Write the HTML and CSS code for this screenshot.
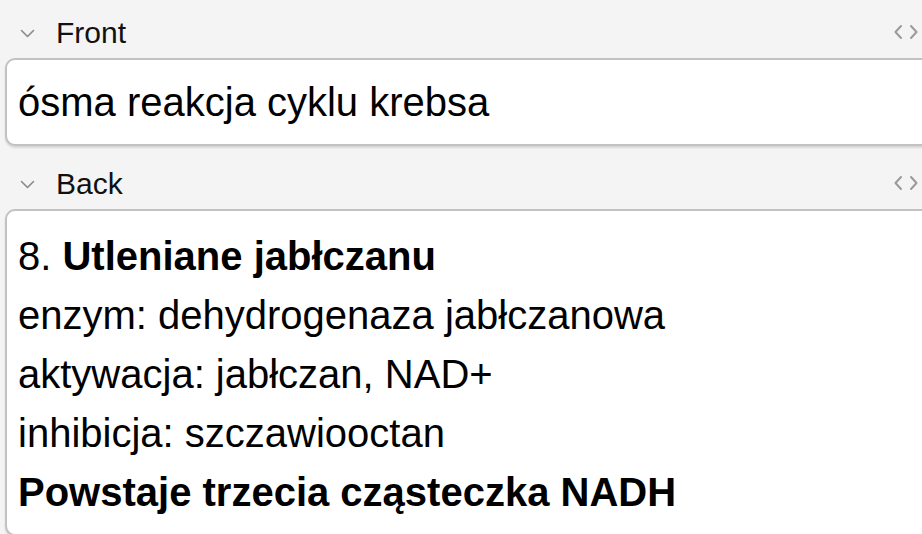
FILE: index.html
```html
<!DOCTYPE html>
<html lang="pl">
<head>
<meta charset="utf-8">
<title>Editor</title>
<link rel="stylesheet" href="styles.css">
</head>
<body>
<div class="fields">
  <div class="field">
    <div class="label-row">
      <svg class="chevron" width="15" height="9" viewBox="0 0 15 9"><path d="M1.5 1.5 L7.5 7.5 L13.5 1.5" fill="none" stroke="#8a8a8a" stroke-width="1.6" stroke-linecap="round" stroke-linejoin="round"/></svg>
      <span class="label">Front</span>
      <svg class="code" width="26" height="16" viewBox="0 0 26 16"><path d="M8 2 L2.5 8 L8 14 M18 2 L23.5 8 L18 14" fill="none" stroke="#9a9a9a" stroke-width="2" stroke-linecap="round" stroke-linejoin="round"/></svg>
    </div>
    <div class="editor front">ósma reakcja cyklu krebsa</div>
  </div>
  <div class="field">
    <div class="label-row">
      <svg class="chevron" width="15" height="9" viewBox="0 0 15 9"><path d="M1.5 1.5 L7.5 7.5 L13.5 1.5" fill="none" stroke="#8a8a8a" stroke-width="1.6" stroke-linecap="round" stroke-linejoin="round"/></svg>
      <span class="label">Back</span>
      <svg class="code" width="26" height="16" viewBox="0 0 26 16"><path d="M8 2 L2.5 8 L8 14 M18 2 L23.5 8 L18 14" fill="none" stroke="#9a9a9a" stroke-width="2" stroke-linecap="round" stroke-linejoin="round"/></svg>
    </div>
    <div class="editor back">
      <div>8. <b>Utleniane jabłczanu</b></div>
      <div>enzym: dehydrogenaza jabłczanowa</div>
      <div>aktywacja: jabłczan, NAD+</div>
      <div>inhibicja: szczawiooctan</div>
      <div><b>Powstaje trzecia cząsteczka NADH</b></div>
    </div>
  </div>
</div>
</body>
</html>
```
FILE: styles.css
```css
html, body {
  margin: 0;
  padding: 0;
  background: #f4f4f4;
  overflow: hidden;
}
body {
  font-family: "Liberation Sans", Arial, sans-serif;
  color: #000;
}
.fields {
  display: flex;
  flex-direction: column;
  margin-top: -5px;
}
.label-row {
  display: flex;
  align-items: center;
  height: 63px;
  box-sizing: border-box;
  padding-top: 13px;
  padding-left: 20px;
}
.chevron {
  flex: none;
}
.label {
  font-size: 30px;
  margin-left: 21px;
  color: #111;
}
.code {
  flex: none;
  margin-left: auto;
  margin-right: 3px;
  margin-top: -2px;
}
.editor {
  margin-left: 5px;
  margin-right: -20px;
  background: #fff;
  border: 2px solid #c2c2c2;
  border-radius: 10px;
  box-shadow: 0 2px 2px rgba(0, 0, 0, 0.12);
  font-size: 40px;
  line-height: 59px;
  padding: 13px 10px 12px 11px;
}
.editor.back {
  padding-top: 16px;
}
.editor b {
  font-weight: bold;
}
```
